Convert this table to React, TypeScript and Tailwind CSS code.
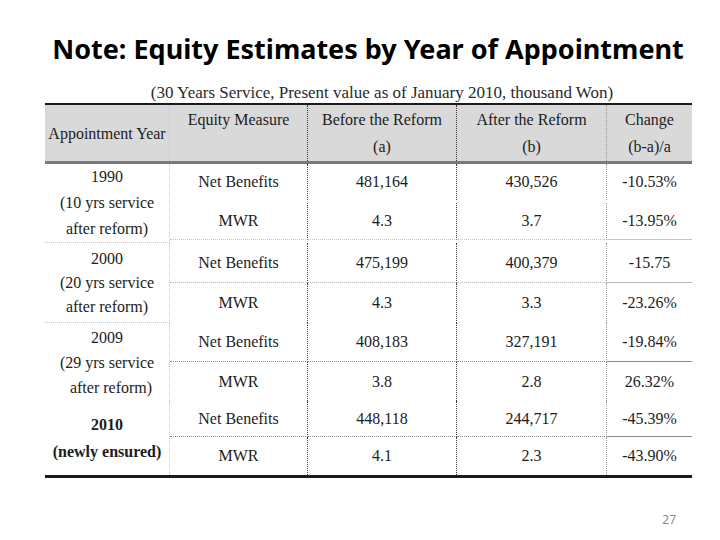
import React from "react";

const serif = { fontFamily: '"Liberation Serif", "DejaVu Serif", serif' };

const C1 = "border-r border-dotted border-r-[#c4c4c4]";
const C2 = "border-r border-dotted border-r-[#3a3a3a]";
const C3 = "border-r border-dotted border-r-[#3a3a3a]";
const C4 = "border-r border-dotted border-r-[#9a9a9a]";

type Row = { m: string; a: string; b: string; c: string; h: string; bottom: string };

function Cells({ r }: { r: Row }) {
  const base = `flex items-center justify-center ${r.h} ${r.bottom}`;
  return (
    <>
      <div className={`${base} ${C2}`}>{r.m}</div>
      <div className={`${base} ${C3}`}>{r.a}</div>
      <div className={`${base} ${C4}`}>{r.b}</div>
      <div className={`${base}`}>{r.c}</div>
    </>
  );
}

export default function App() {
  return (
    <div className="w-[720px] h-[540px] bg-white flex flex-col text-[#1c1c1c]">
      <div
        className="mt-[31px] pl-[16px] text-center text-[27px] leading-[36px] font-bold text-black whitespace-nowrap"
        style={{ fontFamily: '"Noto Sans", "Open Sans", sans-serif' }}
      >
        Note: Equity Estimates by Year of Appointment
      </div>
      <div
        className="mt-[16px] pl-[44px] text-center text-[17px] leading-[20px] whitespace-nowrap text-[#2a2a2a]"
        style={serif}
      >
        (30 Years Service, Present value as of January 2010, thousand Won)
      </div>
      <div
        className="ml-[45px] w-[647px] border-t-2 border-t-[#1a1a1a] border-b-[3px] border-b-[#1a1a1a] text-[16px]"
        style={serif}
      >
        {/* header */}
        <div className="grid grid-cols-[125px_138px_149px_150px_85px] h-[56px] bg-[#d9d9d9] text-center leading-[27px] whitespace-nowrap">
          <div className={`${C1} flex items-center justify-center`}>Appointment Year</div>
          <div className={`${C2} pt-[1px]`}>Equity Measure</div>
          <div className={`${C3} pt-[1px]`}>
            <div>Before the Reform</div>
            <div>(a)</div>
          </div>
          <div className={`${C4} pt-[1px]`}>
            <div>After the Reform</div>
            <div>(b)</div>
          </div>
          <div className="pt-[1px]">
            <div>Change</div>
            <div>(b-a)/a</div>
          </div>
        </div>
        <div className="h-[3px] bg-[#7a7a7a]" />
        {/* body */}
        <div className="grid grid-cols-[125px_138px_149px_150px_85px] whitespace-nowrap text-center">
          {/* 1990 block */}
          <div className={`${C1} row-span-2 flex flex-col items-center justify-center leading-[26px] border-b border-b-[#c4c4c4]`}>
            <div>1990</div>
            <div>(10 yrs service</div>
            <div>after reform)</div>
          </div>
          <Cells r={{ m: "Net Benefits", a: "481,164", b: "430,526", c: "-10.53%", h: "h-[36px]", bottom: "" }} />
          <Cells r={{ m: "MWR", a: "4.3", b: "3.7", c: "-13.95%", h: "h-[37px]", bottom: "border-b border-b-[#c4c4c4]" }} />

          {/* 2000 block */}
          <div className={`${C1} row-span-2 flex flex-col items-center justify-center leading-[24px] border-b border-b-[#c4c4c4]`}>
            <div>2000</div>
            <div>(20 yrs service</div>
            <div>after reform)</div>
          </div>
          <Cells r={{ m: "Net Benefits", a: "475,199", b: "400,379", c: "-15.75", h: "h-[40px]", bottom: "border-b border-b-[#b8b8b8]" }} />
          <Cells r={{ m: "MWR", a: "4.3", b: "3.3", c: "-23.26%", h: "h-[40px]", bottom: "" }} />

          {/* 2009 block */}
          <div className={`${C1} row-span-2 flex flex-col items-center justify-center leading-[25px]`}>
            <div>2009</div>
            <div>(29 yrs service</div>
            <div className="pl-[8px]">after reform)</div>
          </div>
          <Cells r={{ m: "Net Benefits", a: "408,183", b: "327,191", c: "-19.84%", h: "h-[39px]", bottom: "border-b border-b-[#8a8a8a]" }} />
          <Cells r={{ m: "MWR", a: "3.8", b: "2.8", c: "26.32%", h: "h-[39px]", bottom: "" }} />

          {/* 2010 block */}
          <div className={`${C1} row-span-2 flex flex-col items-center justify-center leading-[27px] font-bold text-[16px]`}>
            <div>2010</div>
            <div>(newly ensured)</div>
          </div>
          <Cells r={{ m: "Net Benefits", a: "448,118", b: "244,717", c: "-45.39%", h: "h-[36px]", bottom: "border-b border-b-[#8a8a8a]" }} />
          <Cells r={{ m: "MWR", a: "4.1", b: "2.3", c: "-43.90%", h: "h-[38px]", bottom: "" }} />
        </div>
      </div>
      <div className="mt-[34px] pr-[44px] flex justify-end">
        <span
          className="text-[12px] leading-[16px] text-[#8a8a8a]"
          style={{ fontFamily: '"Noto Sans", "Liberation Sans", sans-serif' }}
        >
          27
        </span>
      </div>
    </div>
  );
}
